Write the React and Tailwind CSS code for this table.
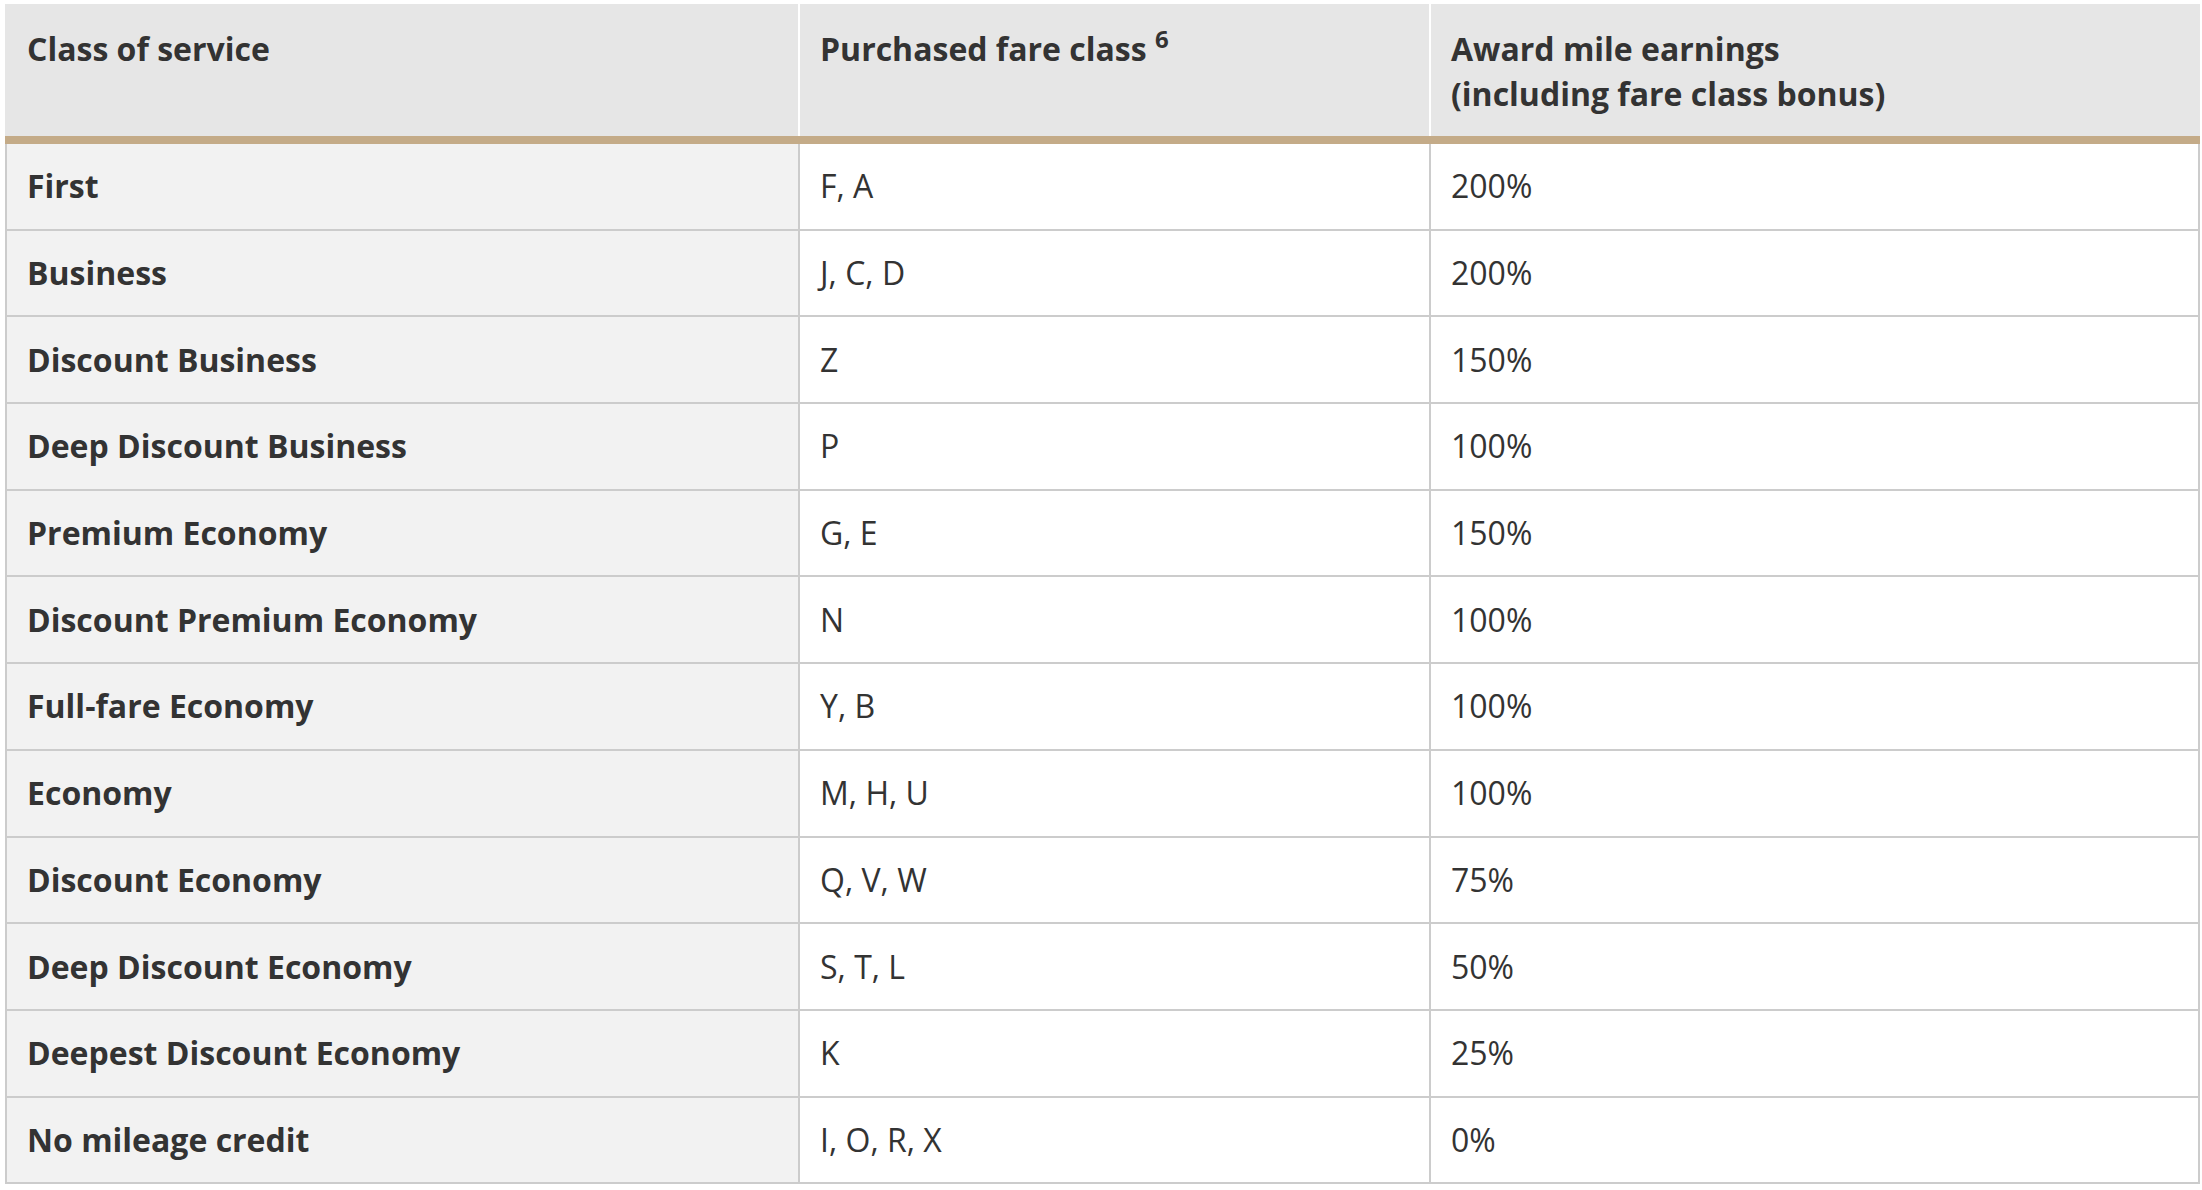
import React from "react";

const rows = [
  ["First", "F, A", "200%"],
  ["Business", "J, C, D", "200%"],
  ["Discount Business", "Z", "150%"],
  ["Deep Discount Business", "P", "100%"],
  ["Premium Economy", "G, E", "150%"],
  ["Discount Premium Economy", "N", "100%"],
  ["Full-fare Economy", "Y, B", "100%"],
  ["Economy", "M, H, U", "100%"],
  ["Discount Economy", "Q, V, W", "75%"],
  ["Deep Discount Economy", "S, T, L", "50%"],
  ["Deepest Discount Economy", "K", "25%"],
  ["No mileage credit", "I, O, R, X", "0%"],
];

export default function App() {
  return (
    <div
      className="bg-white w-[2202px] h-[1190px] pt-[4px] pl-[5px] text-[#333]"
      style={{ fontFamily: '"Open Sans", "Noto Sans", sans-serif' }}
    >
      <div className="w-[2195px]">
        {/* header */}
        <div className="grid grid-cols-[795px_631px_769px] bg-[#e6e6e6] text-[32px] leading-[45px] font-bold">
          <div className="border-r-2 border-white pl-[22px] pr-[20px] pt-[22px] pb-[20px]">
            Class of service
          </div>
          <div className="border-r-2 border-white pl-[20px] pr-[20px] pt-[22px] pb-[20px]">
            Purchased fare class{" "}
            <sup className="text-[24px] leading-none top-[-0.55em]">6</sup>
          </div>
          <div className="pl-[20px] pr-[20px] pt-[22px] pb-[20px]">
            Award mile earnings
            <br />
            (including fare class bonus)
          </div>
        </div>
        <div className="h-[8px] bg-[#c4ab88]" />
        {/* body */}
        {rows.map((r, i) => (
          <div
            key={i}
            className="grid grid-cols-[795px_631px_769px] text-[32px] leading-[48px]"
          >
            <div className="bg-[#f2f2f2] border-l-2 border-r-2 border-b-2 border-[#cccccc] pl-[20px] py-[18.35px] font-bold">
              {r[0]}
            </div>
            <div className="bg-white border-r-2 border-b-2 border-[#cccccc] pl-[20px] py-[18.35px]">
              {r[1]}
            </div>
            <div className="bg-white border-r-2 border-b-2 border-[#cccccc] pl-[20px] py-[18.35px]">
              {r[2]}
            </div>
          </div>
        ))}
      </div>
    </div>
  );
}
